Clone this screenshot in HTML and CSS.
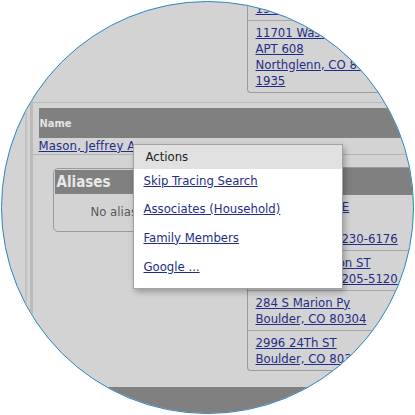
FILE: index.html
```html
<!DOCTYPE html>
<html lang="en">
<head>
<meta charset="utf-8">
<title>Person record - actions menu</title>
<link rel="stylesheet" href="styles.css">
</head>
<body>
<div class="circle">
  <div class="screen">
    <div class="frame">
      <div class="rail rail-a"></div>
      <div class="rail rail-b"></div>
      <div class="main">
        <div class="top">
          <div class="card card-top">
            <div class="row"><a href="#">4410 W 112th Ave<br>Westminster, CO 80031-<br>1941</a></div>
            <div class="row"><a href="#">11701 Washington ST<br>APT 608<br>Northglenn, CO 80233-<br>1935</a></div>
          </div>
        </div>
        <div class="section">
          <div class="name-bar">Name</div>
          <div class="name-row"><a href="#">Mason, Jeffrey A</a></div>
          <div class="details">
            <div class="aliases">
              <div class="box-head">Aliases</div>
              <div class="aliases-body">No aliases found</div>
            </div>
            <div class="card card-addr">
              <div class="box-head">Addresses</div>
              <div class="row"><a href="#">81 Lowry Blvd E<br>APT 302<br>Denver, CO 80230-6176</a></div>
              <div class="row"><a href="#">3101 N Clarkson ST<br>Denver, CO 80205-5120</a></div>
              <div class="row"><a href="#">284 S Marion Py<br>Boulder, CO 80304</a></div>
              <div class="row"><a href="#">2996 24Th ST<br>Boulder, CO 80304</a></div>
            </div>
          </div>
        </div>
      </div>
    </div>
    <div class="footer"></div>

    <div class="menu">
      <div class="menu-head">Actions</div>
      <ul class="menu-list">
        <li><a href="#">Skip Tracing Search</a></li>
        <li><a href="#">Associates (Household)</a></li>
        <li><a href="#">Family Members</a></li>
        <li><a href="#">Google ...</a></li>
      </ul>
    </div>
  </div>
</div>
</body>
</html>
```

FILE: styles.css
```css
html, body {
  margin: 0;
  padding: 0;
  background: #ffffff;
}

body {
  font-family: "DejaVu Sans Condensed", "DejaVu Sans", sans-serif;
  font-stretch: condensed;
  font-size: 13px;
  line-height: 16px;
  color: #222;
}

a {
  color: #1e2d86;
  text-decoration: underline;
}

.circle {
  width: 413px;
  height: 413px;
  margin: 1px;
  box-sizing: border-box;
  border: 1.5px solid #2a87c1;
  border-radius: 50%;
  overflow: hidden;
  background: #d3d3d3;
}

.screen {
  position: relative;
  width: 415px;
  height: 415px;
  margin: -2.5px 0 0 -2.5px;
  display: flex;
  flex-direction: column;
}

.frame {
  height: 387px;
  display: flex;
  flex-shrink: 0;
}

.rail {
  flex-shrink: 0;
}

.rail-a {
  margin-left: 25px;
  width: 2px;
  background: #c3c3c3;
}

.rail-b {
  margin-left: 3px;
  width: 3px;
  background: #bbbbbb;
}

.main {
  flex: 1;
  min-width: 0;
  overflow: hidden;
  display: flex;
  flex-direction: column;
}

.top {
  height: 102px;
  box-sizing: border-box;
  padding: 0 0 9px 214px;
  display: flex;
  flex-direction: column;
  justify-content: flex-end;
  overflow: hidden;
  flex-shrink: 0;
}

.card {
  border: 1px solid #9a9a9a;
  border-right: 0;
}

.card-top {
  border-top: 0;
  border-radius: 0 0 0 4px;
  margin-right: -40px;
}

.row {
  padding: 4px 8px 3px;
  border-top: 1px solid #a8a8a8;
  white-space: nowrap;
}

.card-top .row:first-child {
  border-top: 0;
}

.section {
  border-top: 1px solid #bcbcbc;
  padding-top: 5px;
}

.name-bar {
  margin-left: 6px;
  height: 30px;
  box-sizing: border-box;
  padding: 9px 1px 0;
  background: #808080;
  color: #e4e4e4;
  font-weight: bold;
  font-size: 11px;
  line-height: 14px;
}

.name-row {
  height: 16px;
  padding-left: 6px;
  border-bottom: 1px solid #b4b4b4;
  white-space: nowrap;
  letter-spacing: 0.15px;
}

.details {
  display: flex;
  align-items: flex-start;
  padding: 13px 0 0 20px;
}

.aliases {
  width: 182px;
  flex-shrink: 0;
  box-sizing: border-box;
  border: 1px solid #9a9a9a;
  border-radius: 5px;
  padding: 1px;
}

.box-head {
  height: 24px;
  padding-left: 2px;
  background: #808080;
  color: #e8e8e8;
  font-weight: bold;
  font-size: 15px;
  line-height: 24px;
}

.aliases-body {
  padding: 10px 0 10px 36px;
  color: #5a5a5a;
  white-space: nowrap;
}

.card-addr {
  flex: 1;
  min-width: 0;
  margin: -1px -40px 0 12px;
  border-radius: 4px 0 0 4px;
}

.card-addr .box-head {
  height: 27px;
  line-height: 27px;
  padding-left: 8px;
}

.card-addr .box-head + .row {
  border-top: 0;
}

.footer {
  flex: 1;
  background: #808080;
}

.menu {
  position: absolute;
  left: 133px;
  top: 144px;
  width: 210px;
  height: 145px;
  box-sizing: border-box;
  border: 1px solid #a2a2a2;
  background: #ffffff;
  box-shadow: 2px 3px 6px rgba(0, 0, 0, 0.28);
}

.menu-head {
  height: 24px;
  padding-left: 12px;
  background: #e1e1e1;
  color: #222;
  line-height: 24px;
}

.menu-list {
  list-style: none;
  margin: -2px 0 0;
  padding: 0 0 0 10px;
}

.menu-list li {
  line-height: 28.7px;
  white-space: nowrap;
}
```
